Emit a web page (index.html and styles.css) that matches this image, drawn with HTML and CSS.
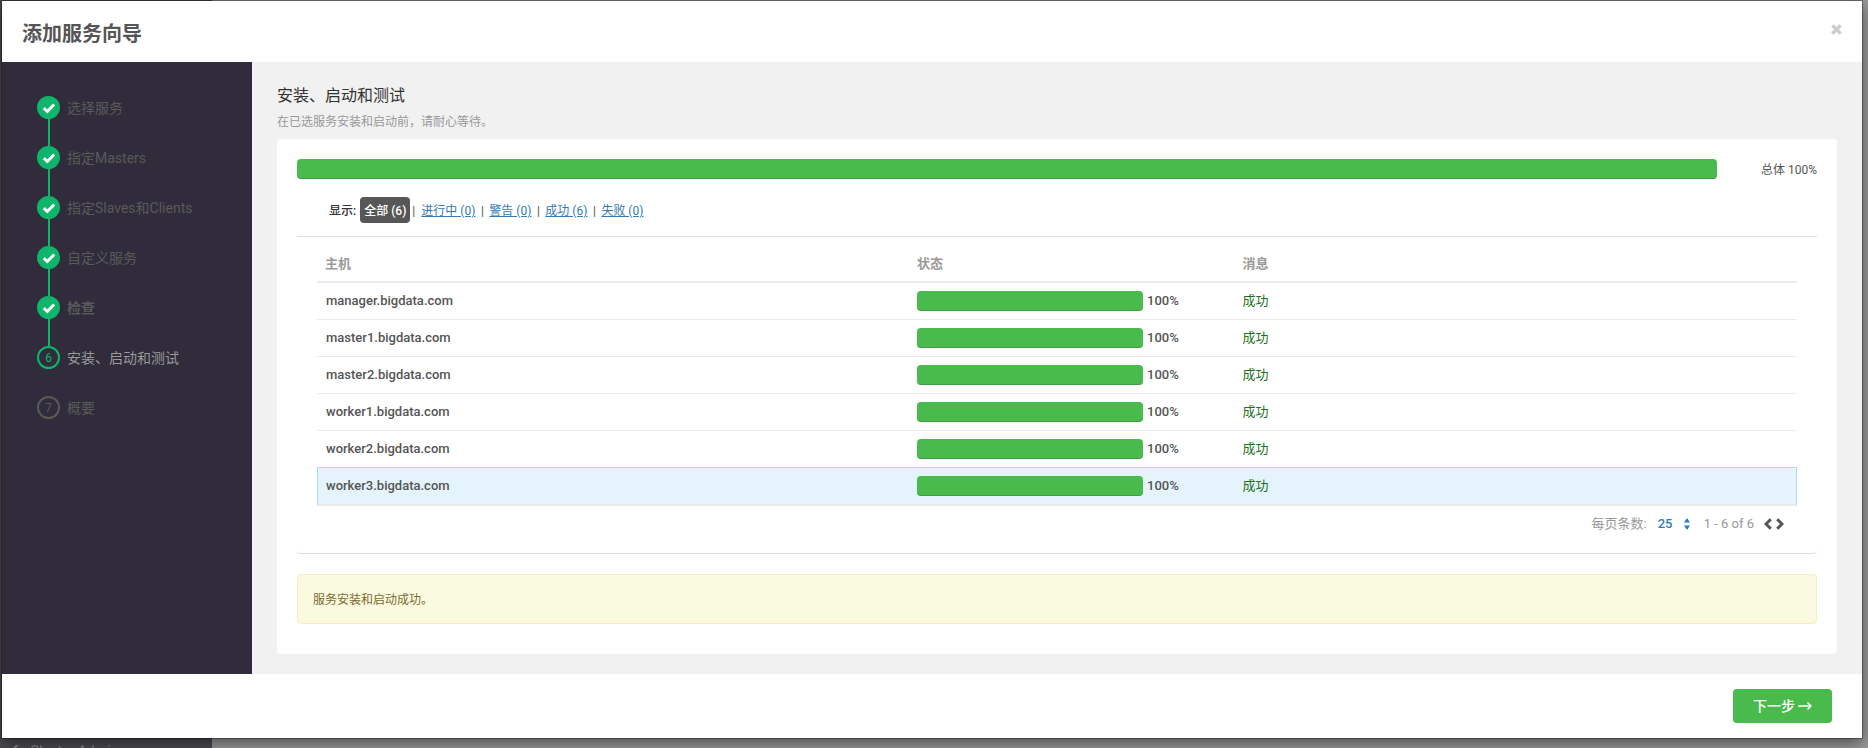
FILE: index.html
```html
<!DOCTYPE html>
<html lang="zh-CN">
<head>
<meta charset="utf-8">
<title>添加服务向导</title>
<link rel="stylesheet" href="styles.css">
</head>
<body>
<div class="backdrop" aria-hidden="true">
  <div class="app-nav">
    <svg class="wrench" viewBox="0 0 14 14"><path d="M13 3.2 10.600 5.400 8.700 5.200 8.500 3.300 10.800 1A4 4 0 0 0 5.700 6L1 10.800a1.600 1.600 0 0 0 2.300 2.300L8 8.300a4 4 0 0 0 5-5.100z"/></svg>
    <span>Cluster Admin</span>
  </div>
</div>
<div class="modal" role="dialog" aria-labelledby="wizard-title">
  <header class="modal-header">
    <h1 id="wizard-title" class="modal-title">添加服务向导</h1>
    <button class="close" type="button" aria-label="关闭"><svg viewBox="0 0 10 10"><path d="M1.200 1.200 8.800 8.800M8.800 1.200 1.200 8.800"/></svg></button>
  </header>
  <div class="modal-body">
    <nav class="steps-nav">
      <ol class="steps">
        <li class="step done"><span class="dot"><svg viewBox="0 0 14 12"><path d="M1.800 6.200 5.300 9.500 12.200 2.500"/></svg></span><span>选择服务</span></li>
        <li class="step done"><span class="dot"><svg viewBox="0 0 14 12"><path d="M1.800 6.200 5.300 9.500 12.200 2.500"/></svg></span><span>指定Masters</span></li>
        <li class="step done"><span class="dot"><svg viewBox="0 0 14 12"><path d="M1.800 6.200 5.300 9.500 12.200 2.500"/></svg></span><span>指定Slaves和Clients</span></li>
        <li class="step done"><span class="dot"><svg viewBox="0 0 14 12"><path d="M1.800 6.200 5.300 9.500 12.200 2.500"/></svg></span><span>自定义服务</span></li>
        <li class="step done strong"><span class="dot"><svg viewBox="0 0 14 12"><path d="M1.800 6.200 5.300 9.500 12.200 2.500"/></svg></span><span>检查</span></li>
        <li class="step current" aria-current="step"><span class="dot">6</span><span>安装、启动和测试</span></li>
        <li class="step"><span class="dot">7</span><span>概要</span></li>
      </ol>
    </nav>
    <main class="content">
      <h2 class="content-title">安装、启动和测试</h2>
      <p class="content-note">在已选服务安装和启动前，请耐心等待。</p>
      <section class="panel">
        <div class="overall">
          <div class="bar"></div>
          <span class="overall-text">总体 100%</span>
        </div>
        <div class="filters">
          <span class="filter-label">显示:</span>
          <a class="filter active" href="#all">全部 (6)</a>
          <span class="sep first">|</span>
          <a class="filter" href="#running">进行中 (0)</a>
          <span class="sep">|</span>
          <a class="filter" href="#warning">警告 (0)</a>
          <span class="sep">|</span>
          <a class="filter" href="#success">成功 (6)</a>
          <span class="sep">|</span>
          <a class="filter" href="#failed">失败 (0)</a>
        </div>
        <div class="hosts-box">
          <table class="hosts">
            <thead><tr><th class="col-host">主机</th><th class="col-status">状态</th><th class="col-message">消息</th></tr></thead>
            <tbody>
              <tr><td>manager.bigdata.com</td><td><div class="status"><div class="bar"></div><span>100%</span></div></td><td><a class="ok" href="#manager">成功</a></td></tr>
              <tr><td>master1.bigdata.com</td><td><div class="status"><div class="bar"></div><span>100%</span></div></td><td><a class="ok" href="#master1">成功</a></td></tr>
              <tr><td>master2.bigdata.com</td><td><div class="status"><div class="bar"></div><span>100%</span></div></td><td><a class="ok" href="#master2">成功</a></td></tr>
              <tr><td>worker1.bigdata.com</td><td><div class="status"><div class="bar"></div><span>100%</span></div></td><td><a class="ok" href="#worker1">成功</a></td></tr>
              <tr><td>worker2.bigdata.com</td><td><div class="status"><div class="bar"></div><span>100%</span></div></td><td><a class="ok" href="#worker2">成功</a></td></tr>
              <tr class="hovered"><td>worker3.bigdata.com</td><td><div class="status"><div class="bar"></div><span>100%</span></div></td><td><a class="ok" href="#worker3">成功</a></td></tr>
            </tbody>
          </table>
          <div class="pager">
            <label for="page-size">每页条数:</label>
            <span class="select-wrap">
              <select id="page-size" class="page-size"><option>10</option><option selected>25</option><option>50</option></select>
              <svg class="sort" viewBox="0 0 6 12"><path d="M3 0 6 4.500H0zM3 12 0 7.500H6z"/></svg>
            </span>
            <span class="range">1 - 6 of 6</span>
            <button class="page-btn" type="button" aria-label="上一页"><svg viewBox="0 0 8 12"><path d="M6.800 1.200 2 6 6.800 10.800"/></svg></button>
            <button class="page-btn" type="button" aria-label="下一页"><svg viewBox="0 0 8 12"><path d="M1.200 1.200 6 6 1.200 10.800"/></svg></button>
          </div>
        </div>
        <div class="alert" role="status">服务安装和启动成功。</div>
      </section>
    </main>
  </div>
  <footer class="modal-footer">
    <button class="next" type="button">下一步 <svg viewBox="0 0 14 10"><path d="M0 5H13M9.500 1.500 13 5 9.500 8.500"/></svg></button>
  </footer>
</div>
</body>
</html>
```
FILE: styles.css
```css
* { box-sizing: border-box; }

body {
  margin: 0;
  min-height: 100vh;
  display: flex;
  padding: 1px 6px 10px 2px;
  background: #999;
  color: #555;
  font: 13px/20px Roboto, "Noto Sans CJK SC", sans-serif;
}

h1, h2, p, ol { margin: 0; padding: 0; }

/* Dimmed application behind the dialog */
.backdrop {
  position: absolute;
  inset: 0;
  overflow: hidden;
  background: linear-gradient(to right, #4b4a52 212px, #999 212px);
}

.app-nav {
  position: absolute;
  left: 8px;
  top: 741px;
  display: flex;
  align-items: center;
  gap: 8px;
  color: #85848a;
  font-size: 14px;
}

.wrench { width: 14px; height: 14px; fill: currentColor; }

.modal {
  position: relative;
  flex: 1;
  min-width: 0;
  display: flex;
  flex-direction: column;
  background: #fff;
  box-shadow: 0 0 0 1px rgba(0, 0, 0, .3), 0 5px 15px rgba(0, 0, 0, .5);
}

.modal-header {
  display: flex;
  justify-content: space-between;
  align-items: center;
  padding: 19px 20px 14px;
}

.modal-title { font-size: 20px; line-height: 28px; font-weight: 700; }

.close {
  align-self: flex-start;
  padding: 4px 0;
  border: 0;
  background: none;
  line-height: 0;
}

.close svg { width: 11px; height: 11px; stroke: #ccc; stroke-width: 3; }

.modal-body { flex: 1; display: flex; }

.steps-nav { width: 250px; padding: 34px 35px; background: #302c3c; }

.steps { list-style: none; }

.step {
  position: relative;
  display: flex;
  align-items: center;
  gap: 7px;
  height: 23px;
  margin-bottom: 27px;
  color: #595959;
  font-size: 14px;
  white-space: nowrap;
}

.dot {
  display: flex;
  align-items: center;
  justify-content: center;
  width: 23px;
  height: 23px;
  border: 2px solid #595959;
  border-radius: 50%;
  font-size: 12px;
}

.done .dot { background: #0eb56a; border-color: #0eb56a; }
.dot svg { width: 14px; height: 12px; fill: none; stroke: #fff; stroke-width: 3; }

.done::after {
  content: "";
  position: absolute;
  left: 11px;
  top: 23px;
  width: 2px;
  height: 27px;
  background: #0eb56a;
}

.strong { font-weight: 700; }
.current { color: #999; }
.current .dot { border-color: #0eb56a; color: #0eb56a; }

.content {
  flex: 1;
  min-width: 0;
  padding: 20px 25px;
  display: flex;
  flex-direction: column;
  background: #f1f1f1;
}

.content-title { padding-top: 1px; color: #333; font-size: 16px; line-height: 26px; font-weight: 400; }
.content-note { padding: 3px 0 7px; color: #999; font-size: 12px; }

.panel { flex: 1; padding: 20px; background: #fff; border-radius: 4px; }

.bar {
  height: 20px;
  border-radius: 4px;
  background: #48bb4c;
  box-shadow: inset 0 -1px 0 rgba(0, 0, 0, .15);
}

.overall { display: grid; grid-template-columns: 1fr 100px; }
.overall-text { text-align: right; font-size: 12px; line-height: 22px; height: 20px; }

.filters {
  display: flex;
  align-items: center;
  padding: 18px 32px 13px;
  font-size: 12px;
}

.filters > * { padding-top: 4px; padding-bottom: 2px; }

.filter-label { margin-right: 4px; color: #333; font-weight: 500; }
.filter { color: #337ab7; text-decoration: underline; }

.filter.active {
  padding-left: 4px;
  padding-right: 4px;
  border-radius: 4px;
  background: #575757;
  color: #fff;
  font-weight: 500;
  text-decoration: none;
}

.sep { width: 14px; text-align: center; }
.sep.first { width: 11px; padding-right: 4px; }

.hosts-box {
  padding: 10px 20px 19px;
  border-top: 1px solid #ddd;
  border-bottom: 1px solid #ddd;
  border-radius: 0 0 4px 4px;
}

.hosts { width: 100%; table-layout: fixed; border-collapse: separate; border-spacing: 0; }

.hosts th {
  height: 36px;
  padding: 0 8px;
  border-bottom: 2px solid #ebebeb;
  color: #999;
  font-weight: 700;
  text-align: left;
}

.hosts td { height: 37px; padding: 0 8px; font-weight: 500; border-top: 1px solid #ebebeb; }
.hosts td:first-child { padding-left: 9px; }
.hosts tr:first-child td { height: 36px; border-top: 0; }
.hosts tr:last-child td { height: 39px; border-bottom: 2px solid #ebebeb; }
.col-host { width: 40%; }
.col-status { width: 22%; }

.hosts .hovered td { background: #e5f3fc; border-top-color: #a7dff2; }
.hosts .hovered td:first-child { padding-left: 8px; border-left: 1px solid #a7dff2; }
.hosts .hovered td:last-child { border-right: 1px solid #a7dff2; }

.status { display: grid; grid-template-columns: 73% auto; gap: 4px; }
.ok { color: #1e7020; font-weight: 400; text-decoration: none; }

.pager {
  display: flex;
  align-items: center;
  justify-content: flex-end;
  padding: 8px 13px 0;
  color: #999;
}

.select-wrap { display: flex; align-items: center; margin: 0 14px 0 11px; }

.page-size {
  width: 26px;
  padding: 0;
  border: 0;
  background: none;
  appearance: none;
  color: #337ab7;
  font: 500 13px/20px Roboto, sans-serif;
}

.sort { width: 6px; height: 12px; fill: #337ab7; }
.range { margin-right: 10px; }
.page-btn { padding: 0; border: 0; background: none; line-height: 0; }
.page-btn + .page-btn { margin-left: 4px; }
.page-btn svg { width: 8px; height: 12px; fill: none; stroke: #555; stroke-width: 3; }

.alert {
  margin-top: 20px;
  padding: 15px 15px 13px;
  border: 1px solid #f5eebf;
  border-radius: 4px;
  background: #fafae0;
  color: #7b6a2c;
  font-size: 12px;
}

.modal-footer { display: flex; justify-content: flex-end; padding: 15px 30px; }

.next {
  display: flex;
  align-items: center;
  gap: 3px;
  height: 34px;
  padding: 0 20px;
  border: 0;
  border-radius: 4px;
  background: #48bb4c;
  color: #fff;
  font: 500 14px/20px Roboto, "Noto Sans CJK SC", sans-serif;
}

.next svg { width: 14px; height: 10px; fill: none; stroke: #fff; stroke-width: 1.5; }
```
